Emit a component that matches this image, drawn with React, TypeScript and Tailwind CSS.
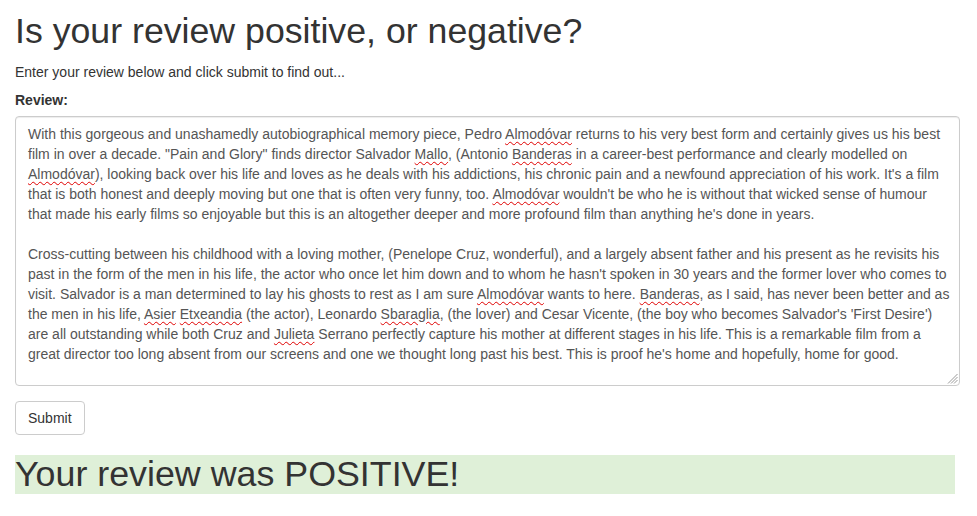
import React from "react";

const Sp = ({ children }: { children: React.ReactNode }) => (
  <span className="underline decoration-wavy decoration-[#e00000] decoration-1 underline-offset-[2px]">
    {children}
  </span>
);

const para1: React.ReactNode[] = [
  <>With this gorgeous and unashamedly autobiographical memory piece, Pedro <Sp>Almodóvar</Sp> returns to his very best form and certainly gives us his best</>,
  <>film in over a decade. "Pain and Glory" finds director Salvador <Sp>Mallo</Sp>, (Antonio <Sp>Banderas</Sp> in a career-best performance and clearly modelled on</>,
  <><Sp>Almodóvar</Sp>), looking back over his life and loves as he deals with his addictions, his chronic pain and a newfound appreciation of his work. It's a film</>,
  <>that is both honest and deeply moving but one that is often very funny, too. <Sp>Almodóvar</Sp> wouldn't be who he is without that wicked sense of humour</>,
  <>that made his early films so enjoyable but this is an altogether deeper and more profound film than anything he's done in years.</>,
];

const para2: React.ReactNode[] = [
  <>Cross-cutting between his childhood with a loving mother, (Penelope Cruz, wonderful), and a largely absent father and his present as he revisits his</>,
  <>past in the form of the men in his life, the actor who once let him down and to whom he hasn't spoken in 30 years and the former lover who comes to</>,
  <>visit. Salvador is a man determined to lay his ghosts to rest as I am sure <Sp>Almodóvar</Sp> wants to here. <Sp>Banderas</Sp>, as I said, has never been better and as</>,
  <>the men in his life, <Sp>Asier</Sp> <Sp>Etxeandia</Sp> (the actor), Leonardo <Sp>Sbaraglia</Sp>, (the lover) and Cesar Vicente, (the boy who becomes Salvador's 'First Desire')</>,
  <>are all outstanding while both Cruz and <Sp>Julieta</Sp> Serrano perfectly capture his mother at different stages in his life. This is a remarkable film from a</>,
  <>great director too long absent from our screens and one we thought long past his best. This is proof he's home and hopefully, home for good.</>,
];

const ResizeGrip = () => (
  <svg className="absolute right-[1px] bottom-[1px]" width="11" height="11" viewBox="0 0 11 11">
    <g stroke="#999" strokeWidth="1">
      <line x1="10.5" y1="1" x2="1" y2="10.5" />
      <line x1="10.5" y1="4" x2="4" y2="10.5" />
      <line x1="10.5" y1="7" x2="7" y2="10.5" />
    </g>
  </svg>
);

export default function App() {
  return (
    <div className="min-h-[516px] bg-white px-[15px] text-[#333] font-['Liberation_Sans',Arial,sans-serif] text-[14px] leading-[20px]">
      <h1 className="pt-[12px] mb-[10px] text-[35.7px] leading-[39.6px] font-normal">
        Is your review positive, or negative?
      </h1>
      <p className="mb-[8px]">Enter your review below and click submit to find out...</p>

      <label className="block font-bold mb-[6px]">Review:</label>
      <div className="relative w-[945px] h-[270px] rounded-[4px] border border-[#ccc] bg-white px-[12px] py-[7px] text-[#555] whitespace-nowrap shadow-[inset_0_1px_1px_rgba(0,0,0,0.075)]">
        {para1.map((l, i) => (
          <div key={"a" + i}>{l}</div>
        ))}
        <div className="h-[20px]" />
        {para2.map((l, i) => (
          <div key={"b" + i}>{l}</div>
        ))}
        <ResizeGrip />
      </div>

      <button className="mt-[15px] h-[34px] px-[12px] rounded-[4px] border border-[#ccc] bg-white text-[#333] text-[14px] leading-[20px]">
        Submit
      </button>

      <h1 className="mt-[20px] w-[940px] bg-[#dff0d8] text-[35.8px] leading-[39px] font-normal">
        Your review was POSITIVE!
      </h1>
    </div>
  );
}
